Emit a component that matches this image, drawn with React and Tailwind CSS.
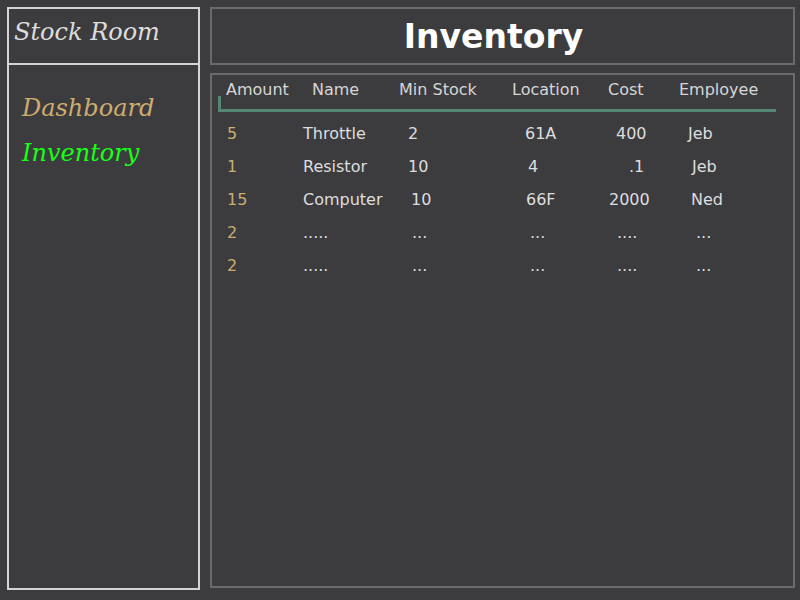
import React from "react";

// each cell carries its own small nudge, the hand-made table isn't aligned
const rows = [
    {
        amount: "5",
        cells: [
            ["Throttle", "pl-0"],
            ["2", "pl-[1px]"],
            ["61A", "pl-0"],
            ["400", "pl-[7px]"],
            ["Jeb", "pl-0"],
        ],
    },
    {
        amount: "1",
        cells: [
            ["Resistor", "pl-0"],
            ["10", "pl-[1px]"],
            ["4", "pl-[3px]"],
            [".1", "pl-[20px]"],
            ["Jeb", "pl-[4px]"],
        ],
    },
    {
        amount: "15",
        cells: [
            ["Computer", "pl-0"],
            ["10", "pl-[4px]"],
            ["66F", "pl-[1px]"],
            ["2000", "pl-0"],
            ["Ned", "pl-[3px]"],
        ],
    },
    {
        amount: "2",
        cells: [
            [".....", "pl-0"],
            ["...", "pl-[5px]"],
            ["...", "pl-[5px]"],
            ["....", "pl-[8px]"],
            ["...", "pl-[8px]"],
        ],
    },
    {
        amount: "2",
        cells: [
            [".....", "pl-0"],
            ["...", "pl-[5px]"],
            ["...", "pl-[5px]"],
            ["....", "pl-[8px]"],
            ["...", "pl-[8px]"],
        ],
    },
];

const colWidths = ["w-[104px]", "w-[118px]", "w-[84px]", "w-[79px]", "w-[80px]"];

const serif = "font-['DejaVu_Serif','Liberation_Serif',serif] italic";
const sans = "font-['DejaVu_Sans','Liberation_Sans',sans-serif]";

export default function App() {
    return (
        <div className={`w-[800px] h-[600px] bg-[#3c3c3e] flex gap-[10px] pl-[7px] pt-[7px] ${sans}`}>
            {/* ================= Sidebar ================= */}
            <div className="w-[193px] h-[583px] flex flex-col">
                <div className="h-[58px] border-2 border-[#d4d4d4] pl-[5px] pt-[7px]">
                    <span className={`${serif} text-[24px] leading-[32px] text-[#dcdcdc]`}>Stock Room</span>
                </div>
                <div className="flex-1 border-2 border-t-0 border-[#d4d4d4] pl-[13px] pt-[21px] flex flex-col">
                    <span className={`${serif} text-[24px] h-[45px] leading-[45px] text-[#cdac70]`}>Dashboard</span>
                    <span className={`${serif} text-[24px] h-[45px] leading-[45px] text-[#16ff16]`}>Inventory</span>
                </div>
            </div>

            {/* ================= Main ================= */}
            <div className="w-[585px] flex flex-col gap-[8px]">
                <div className="h-[58px] border-2 border-[#6a6a6a] flex items-center justify-center pr-[18px]">
                    <h1 className="text-[33px] font-bold text-white leading-none">Inventory</h1>
                </div>

                <div className="h-[515px] border-2 border-[#6a6a6a] flex flex-col">
                    {/* header */}
                    <div className="flex pl-[14px] pt-[3px] h-[27px] text-[16px] leading-[24px] text-[#d6d6d6]">
                        <span className="w-[86px]">Amount</span>
                        <span className="w-[87px]">Name</span>
                        <span className="w-[113px]">Min Stock</span>
                        <span className="w-[96px]">Location</span>
                        <span className="w-[71px]">Cost</span>
                        <span>Employee</span>
                    </div>
                    <div className="ml-[6px] w-[558px] h-[16px] -mt-[6px] border-l-[3px] border-b-[3px] border-[#568674]" />

                    {/* rows */}
                    <div className="mt-[5px] flex flex-col">
                        {rows.map((r, i) => (
                            <div key={i} className="flex h-[33px] items-center pl-[15px] text-[16px] text-[#dedede]">
                                <span className="w-[76px] text-[#cdac70]">{r.amount}</span>
                                {r.cells.map(([text, nudge], j) => (
                                    <span key={j} className={`${colWidths[j]} ${nudge}`}>
                                        {text}
                                    </span>
                                ))}
                            </div>
                        ))}
                    </div>
                </div>
            </div>
        </div>
    );
}
